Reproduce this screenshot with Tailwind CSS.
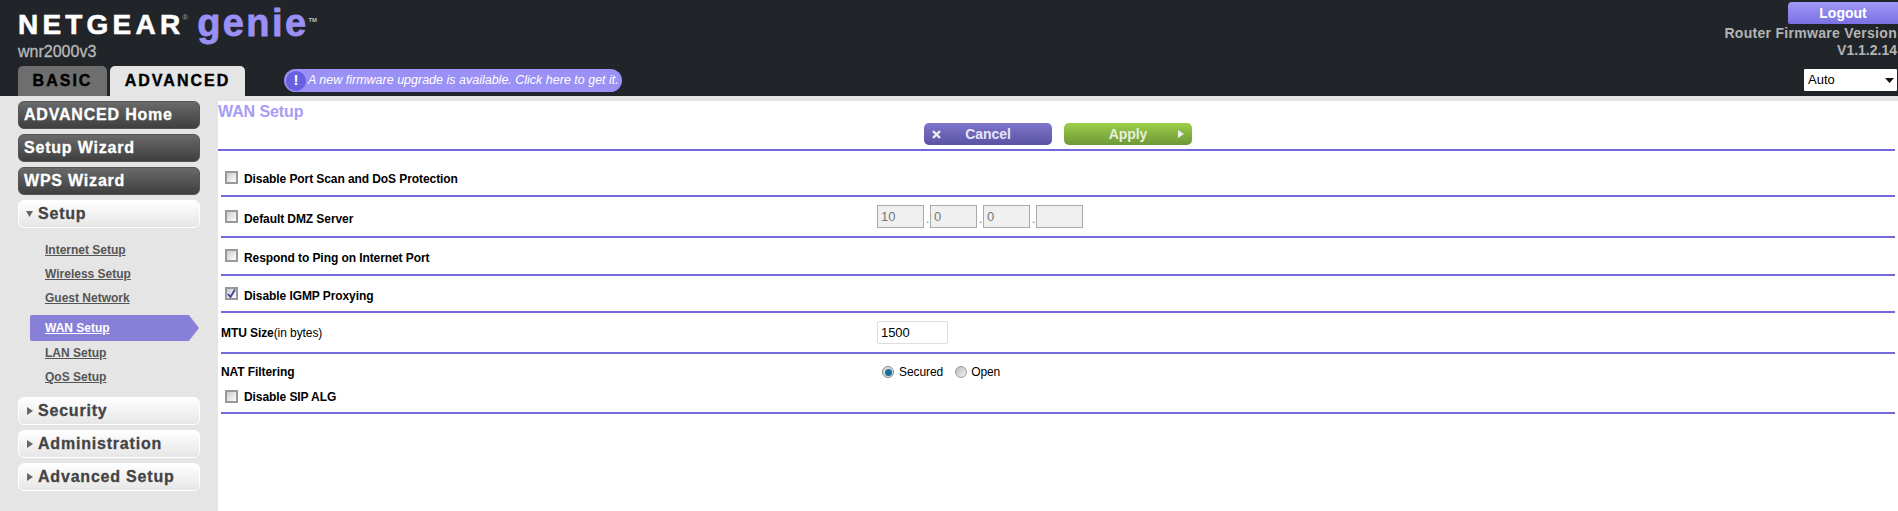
<!DOCTYPE html>
<html lang="en">
  <head>
    <meta charset="UTF-8" />
    <title>NETGEAR Router wnr2000v3</title>
    <script src="https://cdn.jsdelivr.net/npm/@tailwindcss/browser@4"></script>
  </head>
  <body class="h-[511px] overflow-hidden bg-[#e5e5e5] font-['Liberation_Sans',Arial,sans-serif] text-[12px]">
    <!-- Header -->
    <header class="flex h-[96px] justify-between bg-[#212529]">
      <div class="flex flex-col pl-[18px]">
        <div class="flex h-[42px]">
          <span class="mt-[9px] text-[28px] leading-[32px] font-bold tracking-[4.2px] text-white [-webkit-text-stroke:0.6px_white]">NETGEAR</span>
          <span class="mt-[1px] -ml-[2px] pt-[12px] text-[8px] leading-[10px] text-gray-400">®</span>
          <span class="mt-[3px] ml-[9px] text-[38px] leading-[40px] font-bold tracking-[2.4px] text-[#9a8ff5] [-webkit-text-stroke:0.8px_#9a8ff5]">genie</span>
          <span class="pt-[16px] text-[6px] leading-[8px] font-bold text-[#bbb]">TM</span>
        </div>
        <div class="h-[24px] pt-[1px] text-[16px] leading-[18px] text-[#b9b9b9] [-webkit-text-stroke:0.3px_#b9b9b9]">wnr2000v3</div>
        <div class="flex h-[30px]">
          <a class="flex w-[89px] items-center justify-center rounded-t-[5px] bg-[#6e6e6e] text-[16px] font-bold tracking-[2px] text-black [-webkit-text-stroke:0.4px_black]">BASIC</a>
          <a class="ml-[3px] flex w-[135px] items-center justify-center rounded-t-[5px] bg-[#e5e5e5] text-[16px] font-bold tracking-[2px] text-black [-webkit-text-stroke:0.4px_black]">ADVANCED</a>
          <a class="mt-[3px] ml-[39px] flex h-[23px] w-[338px] items-center rounded-full bg-[#9a90f5] pl-[2px] text-[12.500px] whitespace-nowrap text-white italic">
            <span class="flex h-[20px] w-[20px] shrink-0 items-center justify-center rounded-full bg-[#6a5fe0] text-[15px] font-bold not-italic">!</span>
            <span class="ml-[2px]">A new firmware upgrade is available. Click here to get it.</span>
          </a>
        </div>
      </div>
      <div class="flex flex-col items-end">
        <button class="mt-[2px] h-[22px] w-[110px] rounded-tl-[4px] rounded-bl-[2px] bg-gradient-to-b from-[#a097f7] to-[#7c70e2] text-[14px] font-bold text-white">Logout</button>
        <div class="mt-[1px] pr-[1px] text-right text-[14px] leading-[17px] font-bold text-[#b4b4b4]">
          <div class="tracking-[0.3px]">Router Firmware Version</div>
          <div>V1.1.2.14</div>
        </div>
        <div class="relative mt-[10px] mr-[1px] h-[22px] w-[93px]">
          <select class="h-full w-full appearance-none rounded-[1px] bg-white pl-[4px] text-[13px] text-black">
            <option>Auto</option>
          </select>
          <svg class="absolute top-[9px] right-[3px]" width="9" height="5" viewBox="0 0 9 5"><path d="M0 0h9L4.500 5z" fill="#111" /></svg>
        </div>
      </div>
    </header>

    <div class="flex pt-[5px]">
      <!-- Sidebar -->
      <aside class="flex w-[218px] shrink-0 flex-col gap-[5px] pl-[18px]">
        <a class="flex h-[28px] w-[182px] items-center rounded-[6px] border border-[#555] bg-gradient-to-b from-[#6a6a6a] to-[#3f3f3f] pl-[5px] text-[16px] font-bold tracking-[0.8px] text-white [-webkit-text-stroke:0.3px_white]">ADVANCED Home</a>
        <a class="flex h-[28px] w-[182px] items-center rounded-[6px] border border-[#555] bg-gradient-to-b from-[#6a6a6a] to-[#3f3f3f] pl-[5px] text-[16px] font-bold tracking-[0.8px] text-white [-webkit-text-stroke:0.3px_white]">Setup Wizard</a>
        <a class="flex h-[28px] w-[182px] items-center rounded-[6px] border border-[#555] bg-gradient-to-b from-[#6a6a6a] to-[#3f3f3f] pl-[5px] text-[16px] font-bold tracking-[0.8px] text-white [-webkit-text-stroke:0.3px_white]">WPS Wizard</a>
        <a class="flex h-[28px] w-[182px] items-center rounded-[6px] border border-white bg-gradient-to-b from-white to-[#e6e6e6] pl-[7px] text-[16px] font-bold tracking-[0.8px] text-[#444] [-webkit-text-stroke:0.3px_#444]">
          <svg class="mr-[5px]" width="7" height="6" viewBox="0 0 7 6"><path d="M0 0h7L3.500 6z" fill="#666" /></svg>Setup
        </a>
        <nav class="flex flex-col pt-[5px] pb-[3px] font-bold text-[#555]">
          <a class="flex h-[24px] items-center pl-[27px] underline">Internet Setup</a>
          <a class="flex h-[24px] items-center pl-[27px] underline">Wireless Setup</a>
          <a class="flex h-[24px] items-center pl-[27px] underline">Guest Network</a>
          <a class="mt-[5px] ml-[12px] flex h-[26px] w-[169px] items-center rounded-l-[2px] bg-[#8880d8] pl-[15px] text-white underline [clip-path:polygon(0_0,94%_0,100%_50%,94%_100%,0_100%)]">WAN Setup</a>
          <a class="flex h-[24px] items-center pl-[27px] underline">LAN Setup</a>
          <a class="flex h-[24px] items-center pl-[27px] underline">QoS Setup</a>
        </nav>
        <a class="flex h-[28px] w-[182px] items-center rounded-[6px] border border-white bg-gradient-to-b from-white to-[#e6e6e6] pl-[8px] text-[16px] font-bold tracking-[0.8px] text-[#444] [-webkit-text-stroke:0.3px_#444]">
          <svg class="mr-[5px]" width="6" height="8" viewBox="0 0 6 8"><path d="M0 0l6 4-6 4z" fill="#666" /></svg>Security
        </a>
        <a class="flex h-[28px] w-[182px] items-center rounded-[6px] border border-white bg-gradient-to-b from-white to-[#e6e6e6] pl-[8px] text-[16px] font-bold tracking-[0.8px] text-[#444] [-webkit-text-stroke:0.3px_#444]">
          <svg class="mr-[5px]" width="6" height="8" viewBox="0 0 6 8"><path d="M0 0l6 4-6 4z" fill="#666" /></svg>Administration
        </a>
        <a class="flex h-[28px] w-[182px] items-center rounded-[6px] border border-white bg-gradient-to-b from-white to-[#e6e6e6] pl-[8px] text-[16px] font-bold tracking-[0.8px] text-[#444] [-webkit-text-stroke:0.3px_#444]">
          <svg class="mr-[5px]" width="6" height="8" viewBox="0 0 6 8"><path d="M0 0l6 4-6 4z" fill="#666" /></svg>Advanced Setup
        </a>
      </aside>

      <!-- Main Content -->
      <main class="h-[410px] flex-1 bg-white pr-[3px] font-bold tracking-[-0.08px] text-black">
        <div class="h-[50px] border-b-2 border-[#7369dd]">
          <h1 class="text-[16px] leading-[22px] font-bold text-[#a79cf5]">WAN Setup</h1>
          <div class="flex justify-center gap-[12px] pl-[3px]">
            <button class="relative h-[22px] w-[128px] rounded-[5px] bg-gradient-to-b from-[#7f76cc] to-[#5a52a2] text-[14px] font-bold text-[#e6e6f6]">
              <svg class="absolute top-[7px] left-[8px]" width="9" height="9" viewBox="0 0 9 9"><path d="M1 1l7 7M8 1l-7 7" stroke="#eee" stroke-width="2.400" /></svg>
              Cancel
            </button>
            <button class="relative h-[22px] w-[128px] rounded-[5px] bg-gradient-to-b from-[#9ccf48] to-[#6e9839] text-[14px] font-bold text-[#e6f0dc]">
              Apply
              <svg class="absolute top-[7px] right-[8px]" width="6" height="8" viewBox="0 0 6 8"><path d="M0 0l6 4-6 4z" fill="#eee" /></svg>
            </button>
          </div>
        </div>

        <div class="ml-[3px] flex h-[46px] items-center border-b-2 border-[#7369dd] pt-[8px] pl-[4px]">
          <div class="h-[13px] w-[13px] border-2 border-[#999] bg-gradient-to-br from-[#ccc] to-white"></div>
          <span class="ml-[6px] pt-[4px]">Disable Port Scan and DoS Protection</span>
        </div>

        <div class="ml-[3px] flex h-[41px] items-center border-b-2 border-[#7369dd] pl-[4px]">
          <div class="h-[13px] w-[13px] border-2 border-[#999] bg-gradient-to-br from-[#ccc] to-white"></div>
          <span class="ml-[6px] w-[633px] pt-[4px]">Default DMZ Server</span>
          <div class="flex items-end gap-[2px] font-normal text-[#777]">
            <input disabled value="10" class="h-[23px] w-[47px] border border-[#aaa] bg-[#f0f0f0] pl-[3px] text-[13px]" />
            <span class="w-[2px]">.</span>
            <input disabled value="0" class="h-[23px] w-[47px] border border-[#aaa] bg-[#f0f0f0] pl-[3px] text-[13px]" />
            <span class="w-[2px]">.</span>
            <input disabled value="0" class="h-[23px] w-[47px] border border-[#aaa] bg-[#f0f0f0] pl-[3px] text-[13px]" />
            <span class="w-[2px]">.</span>
            <input disabled class="h-[23px] w-[47px] border border-[#aaa] bg-[#f0f0f0] pl-[3px] text-[13px]" />
          </div>
        </div>

        <div class="ml-[3px] flex h-[38px] items-center border-b-2 border-[#7369dd] pl-[4px]">
          <div class="-mt-[1px] h-[13px] w-[13px] border-2 border-[#999] bg-gradient-to-br from-[#ccc] to-white"></div>
          <span class="ml-[6px] pt-[4px]">Respond to Ping on Internet Port</span>
        </div>

        <div class="ml-[3px] flex h-[37px] items-center border-b-2 border-[#7369dd] pl-[4px]">
          <div class="flex h-[13px] w-[13px] items-center justify-center border-2 border-[#999] bg-gradient-to-br from-[#ccc] to-white">
            <svg width="9" height="9" viewBox="0 0 9 9"><path d="M1 5l2.500 3L8 0.500" fill="none" stroke="#3f3f9a" stroke-width="1.800" /></svg>
          </div>
          <span class="ml-[6px] pt-[4px]">Disable IGMP Proxying</span>
        </div>

        <div class="ml-[3px] flex h-[41px] items-center border-b-2 border-[#7369dd]">
          <span class="w-[656px]">MTU Size<span class="font-normal">(in bytes)</span></span>
          <input value="1500" class="h-[23px] w-[71px] rounded-[2px] border border-[#ddd] pl-[3px] text-[13px] font-normal" />
        </div>

        <div class="ml-[3px] h-[60px] border-b-2 border-[#7369dd]">
          <div class="flex h-[33px] items-center pt-[3px]">
            <span class="w-[661px]">NAT Filtering</span>
            <div class="flex items-center font-normal">
              <div class="flex h-[12px] w-[12px] items-center justify-center rounded-full border border-[#888] bg-[#ddd]">
                <div class="h-[7px] w-[7px] rounded-full bg-[#17709f]"></div>
              </div>
              <span class="ml-[5px]">Secured</span>
              <div class="ml-[12px] h-[12px] w-[12px] rounded-full border border-[#999] bg-gradient-to-br from-[#bbb] to-[#f4f4f4]"></div>
              <span class="ml-[4px]">Open</span>
            </div>
          </div>
          <div class="-mt-[1px] flex items-center pl-[4px]">
            <div class="h-[13px] w-[13px] border-2 border-[#999] bg-gradient-to-br from-[#ccc] to-white"></div>
            <span class="ml-[6px] pt-[2px]">Disable SIP ALG</span>
          </div>
        </div>
      </main>
    </div>
  </body>
</html>
